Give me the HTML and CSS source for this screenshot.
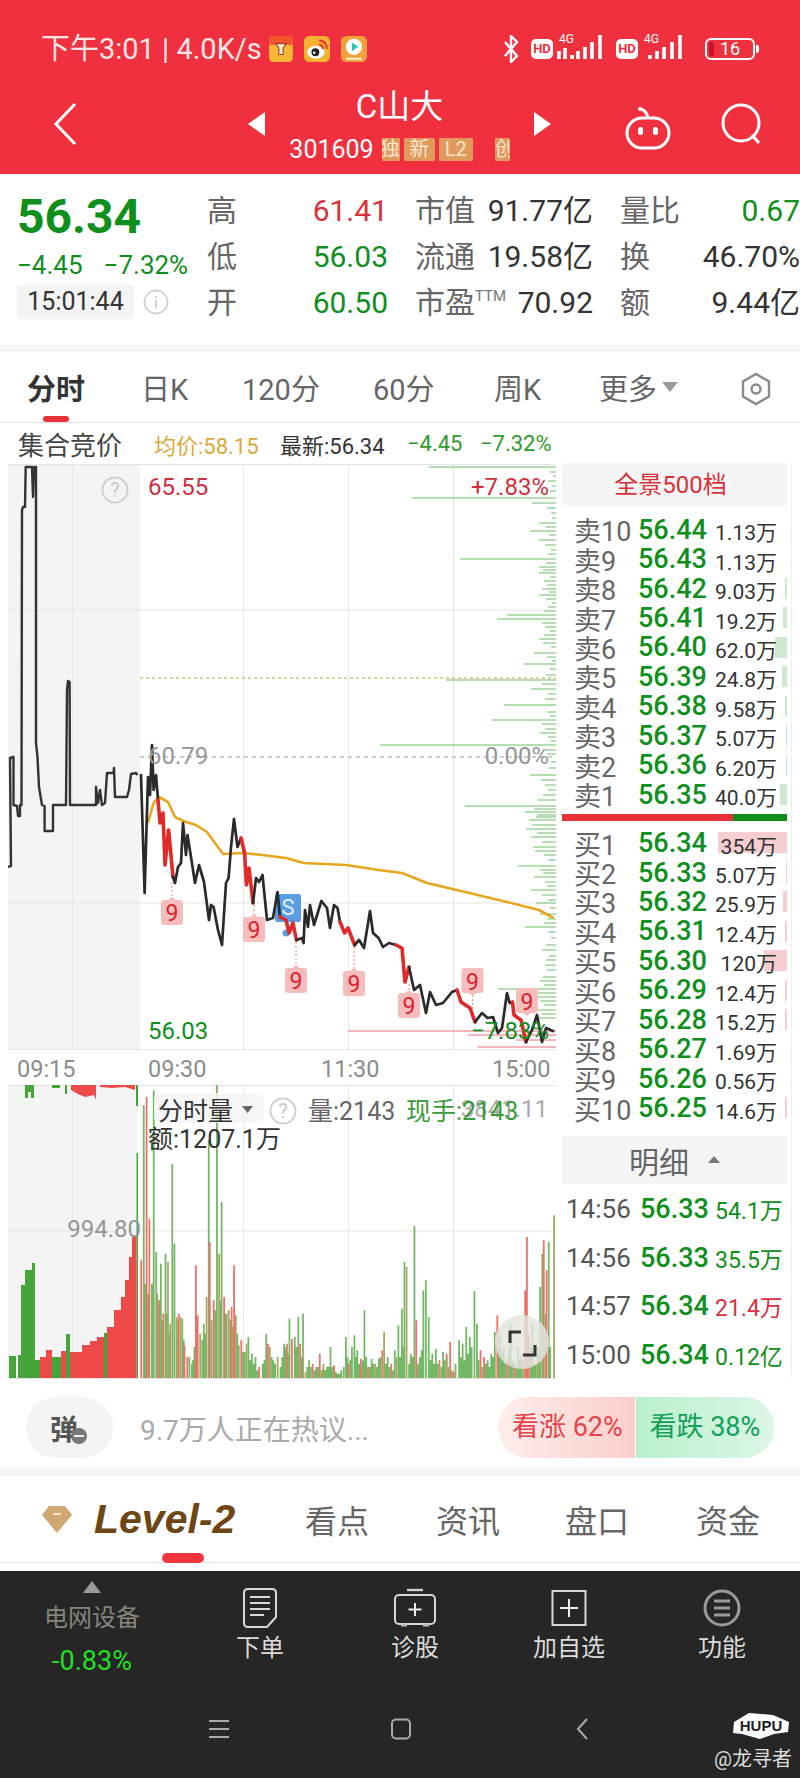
FILE: index.html
```html
<!DOCTYPE html>
<html lang="zh-CN">
<head>
<meta charset="utf-8">
<title>C山大</title>
<link rel="stylesheet" href="styles.css">
</head>
<body>
<div class="page">
  <header class="top">
    <div class="status">
      <span class="status-text">下午3:01 | 4.0K/s</span>
      <svg class="app-icon app-first" viewBox="0 0 24 24"><rect x="1" y="0" width="22" height="24" rx="4" fill="#f7b733"/><path d="M1 4a4 4 0 0 1 4-4h14a4 4 0 0 1 4 4v4H1z" fill="#f0552b"/><path d="M7 7h10l-3 4v6h-4v-6z" fill="#fff3c9" stroke="#a33" stroke-width="1"/></svg>
      <svg class="app-icon app-second" viewBox="0 0 24 24"><rect width="24" height="24" rx="5" fill="#f4b431"/><ellipse cx="11" cy="15" rx="8" ry="6" fill="#fff"/><circle cx="10.500" cy="15" r="3.600" fill="#222"/><circle cx="9.500" cy="15.500" r="1.200" fill="#fff"/><path d="M14 4a7 7 0 0 1 7 8M14 8a3.500 3.500 0 0 1 3.500 4" fill="none" stroke="#e6362c" stroke-width="2"/></svg>
      <svg class="app-icon app-third" viewBox="0 0 24 24"><rect width="24" height="24" rx="5" fill="#f2a03b"/><circle cx="12" cy="10" r="7.500" fill="#fff"/><path d="M10 6l6 4-6 4z" fill="#31c5b4"/><rect x="5" y="20" width="14" height="2" fill="#fff3c9"/></svg>
      <span class="status-right">
        <svg class="bt" viewBox="0 0 18 28"><path d="M3 7l12 14-6 6V1l6 6L3 21" fill="none" stroke="#fff" stroke-width="2.400"/></svg>
        <span class="hd">HD</span>
        <svg class="sig" viewBox="0 0 48 28"><text class="sig-text" x="2" y="10">4G</text><path d="M2 18v8M8 15v11M15 22v4M21 18v8M28 14v12M35 9v17M43 2v24" stroke="#fff" stroke-width="3.600" fill="none"/></svg>
        <span class="hd">HD</span>
        <svg class="sig" viewBox="0 0 48 28"><text class="sig-text" x="2" y="10">4G</text><path d="M8 22v4M15 18v8M22 14v12M30 9v17M38 2v24" stroke="#fff" stroke-width="3.600" fill="none"/></svg>
        <span class="battery"><i class="battery-low"></i><b class="battery-num">16</b></span>
      </span>
    </div>
    <div class="nav">
      <svg class="back" viewBox="0 0 24 44"><path d="M22 2L3 22l19 20" fill="none" stroke="#fff" stroke-width="3"/></svg>
      <svg class="arrow" viewBox="0 0 17 24"><path d="M17 0v24L0 12z" fill="#fff"/></svg>
      <div class="title-block">
        <div class="title">C山大</div>
        <div class="code-row">
          <span class="code">301609</span>
          <span class="badge badge-crop-l"><span>独</span></span>
          <span class="badge">新</span>
          <span class="badge badge-l2">L2</span>
          <span class="badge badge-crop-r"><span>创</span></span>
        </div>
      </div>
      <svg class="arrow" viewBox="0 0 17 24"><path d="M0 0v24l17-12z" fill="#fff"/></svg>
      <div class="nav-actions">
        <svg class="robot" viewBox="0 0 46 44"><path d="M23 12C22 7 19 4 16 3" fill="none" stroke="#fff" stroke-width="3"/><circle cx="15" cy="3" r="2" fill="#fff"/><rect x="2" y="12" width="42" height="30" rx="15" fill="none" stroke="#fff" stroke-width="3"/><rect x="13" y="21" width="5" height="8" rx="2.500" fill="#fff"/><rect x="28" y="21" width="5" height="8" rx="2.500" fill="#fff"/></svg>
        <svg class="search" viewBox="0 0 42 42"><circle cx="20" cy="20" r="18" fill="none" stroke="#fff" stroke-width="3"/><path d="M31 32l7 8" stroke="#fff" stroke-width="3"/></svg>
      </div>
    </div>
  </header>

  <section class="quote">
    <div class="price-block">
      <div class="price">56.34</div>
      <div class="delta"><span>−4.45</span><span>−7.32%</span></div>
      <div class="clock-row">
        <span class="clock">15:01:44</span>
        <svg class="info" viewBox="0 0 26 26"><circle cx="13" cy="13" r="11.500" fill="none" stroke="#d4d4d4" stroke-width="2"/><path d="M13 11v8M13 7v2" stroke="#d4d4d4" stroke-width="2"/></svg>
      </div>
    </div>
    <div class="stats">
      <div class="stat"><span>高</span><span class="red">61.41</span></div>
      <div class="stat"><span>市值</span><span class="ink">91.77亿</span></div>
      <div class="stat"><span>量比</span><span class="green">0.67</span></div>
      <div class="stat"><span>低</span><span class="green">56.03</span></div>
      <div class="stat"><span>流通</span><span class="ink">19.58亿</span></div>
      <div class="stat"><span>换</span><span class="ink">46.70%</span></div>
      <div class="stat"><span>开</span><span class="green">60.50</span></div>
      <div class="stat"><span>市盈<sup class="ttm">TTM</sup></span><span class="ink">70.92</span></div>
      <div class="stat"><span>额</span><span class="ink">9.44亿</span></div>
    </div>
  </section>

  <nav class="period-tabs">
    <span class="period period-active">分时</span>
    <span class="period">日K</span>
    <span class="period">120分</span>
    <span class="period">60分</span>
    <span class="period">周K</span>
    <span class="period">更多<i class="caret"></i></span>
    <svg class="hex" viewBox="0 0 34 34"><path d="M17 2l13 7.500v15L17 32 4 24.500v-15z" fill="none" stroke="#8a8a8a" stroke-width="2.400"/><circle cx="17" cy="17" r="4.500" fill="none" stroke="#8a8a8a" stroke-width="2.400"/></svg>
  </nav>

  <div class="subhead">
    <span class="sub-auction">集合竞价</span>
    <span class="sub-avg">均价:58.15</span>
    <span class="sub-last">最新:56.34</span>
    <span class="sub-green">−4.45</span>
    <span class="sub-green">−7.32%</span>
  </div>

  <main class="main">
    <div class="charts">
      <svg class="price-chart" viewBox="8 464 548 586">
        <rect x="8" y="464" width="132" height="586" fill="#f4f4f4"/>
        <path class="grid" d="M8 464.500H556M8 610H556M8 903H556M8 1049.500H556M73 464V1050M243.500 464V1050M348.500 464V1050M453.500 464V1050"/>
        <path class="dash-grey" d="M140 757H556"/>
        <path class="depth-green" d="M556 467H429M556 498H412M556 503H532M556 523H539M556 531H530M556 540H539M556 559H460M556 567H539M556 573H539M556 595H539M556 615H507M556 619H497M556 639H539M556 653H534M556 664H524M556 680H446M556 689H531M556 705H504M556 720H492M556 745H380M556 775H530M556 806H465M556 812H525M556 817H536M556 847H533M556 866H518M556 873H543M556 890H531M556 903H536M556 927H525M556 960H546M556 977H543M556 989H498M556 472h-6M556 476h-3M556 481h-8M556 486h-4M556 491h-6M556 508h-9M556 513h-5M556 518h-4M556 527h-10M556 535h-7M556 545h-11M556 550h-5M556 554h-8M556 563h-10M556 570h-13M556 577h-6M556 581h-12M556 585h-9M556 589h-14M556 592h-7M556 599h-10M556 603h-4M556 607h-8M556 611h-12M556 623h-14M556 627h-11M556 631h-6M556 635h-12M556 643h-13M556 647h-5M556 657h-9M556 661h-4M556 669h-6M556 675h-10M556 684h-14M556 694h-8M556 699h-11M556 712h-9M556 716h-6M556 724h-14M556 729h-11M556 733h-16M556 737h-8M556 741h-5M556 750h-12M556 754h-9M556 762h-5M556 768h-7M556 780h-15M556 785h-11M556 790h-8M556 795h-13M556 800h-18M556 809h-22M556 815h-19M556 820h-27M556 825h-24M556 829h-30M556 833h-19M556 837h-25M556 842h-14M556 851h-21M556 855h-12M556 860h-8M556 870h-16M556 877h-22M556 882h-11M556 886h-9M556 895h-14M556 900h-8M556 908h-6M556 914h-16M556 919h-9M556 923h-12M556 932h-8M556 938h-5M556 945h-10M556 950h-14M556 956h-7M556 965h-11M556 970h-9M556 981h-16M556 985h-12M556 993h-22M556 997h-26M556 1001h-16M556 1005h-12M556 1010h-19M556 1014h-14M556 1018h-22"/>
        <path class="depth-red" d="M556 1031H348M556 1035H468M556 1040H516M556 1047H478"/>
        <path class="dash-yellow" d="M140 678H556"/>
        <polyline class="line-black-thin" points="7,867 11,866 10,758 13.500,757 13.500,805 17,806 18,816 20,816 20,805 21.500,805 22,510 23,507 25,507 25.700,467 32,467 33,497 34,467 36,467 36,743 37.500,757 39,787 42,805 44.600,806 44.600,831 53,831 53,805 66,805 67,690 68,681 69.600,682 70,805 96,805 96,787 98,803 100,790 102,805 105,803 107,773 113.600,773 114,768 115,797 127,797 129,790 131,774 136,773 137.500,775"/>
        <polyline class="line-orange" points="148,823 153.600,803 159,797 168,802 175,817 186,822 196,825 207,832 223,854 243,853 262.500,855 286,858 303.600,863 346,865 378.600,870 402,873 427,883 461,891 507,902 539,910 553.600,918"/>
        <line class="stem" x1="172" y1="882" x2="172" y2="900"/>
        <line class="stem" x1="254" y1="905" x2="254" y2="917"/>
        <line class="stem" x1="296" y1="942" x2="296" y2="968"/>
        <line class="stem" x1="354" y1="947" x2="354" y2="971"/>
        <line class="stem" x1="409" y1="984" x2="409" y2="993"/>
        <line class="stem" x1="472.500" y1="995" x2="472.500" y2="1020"/>
        <rect class="s-badge" x="275" y="894" width="26" height="28" rx="2"/>
        <circle class="s-dot" cx="286" cy="933" r="3.500"/>
        <text class="s-text" x="288" y="915">S</text>
        <polyline class="line-black" points="141,775 144.600,893 148,777 150,795 152,745 153.600,790 156,775 158,800"/>
        <polyline class="line-red" points="158,800 160,823 163,813 165,865 168.600,830 173,877"/>
        <polyline class="line-black" points="173,877 175,883 178,867 181,863 183,823 186,855 187.500,835 191,857 195,883 199,865 204,882 209,920 211,905 213.600,907 218,930 222,945 226,883 228.600,878 231,847 234,819 237.500,847 241,838"/>
        <polyline class="line-red" points="241,838 244.600,853 246.400,885 249,868 253,903"/>
        <polyline class="line-black" points="253,903 256,878 259,882 262.500,875 267,920 273,918 277.500,892 280,917"/>
        <polyline class="line-red" points="280,917 286,920 289,933 293,923 296.400,940"/>
        <polyline class="line-black" points="296.400,940 302,938 303.600,943 305,910 308,927 310,905 314,925 321.400,901 327,908 330,928 334,905 337.500,908 340,922"/>
        <polyline class="line-red" points="340,922 344.600,933 348,928 354.600,945"/>
        <polyline class="line-black" points="354.600,945 359,940 364,948 370,911 373,933 378.600,938 383,947 389,943 396,945"/>
        <polyline class="line-red" points="396,945 402,948 405,982 409,967"/>
        <polyline class="line-black" points="409,967 414,990 420,985 426,1013 430,992 436,1005 443,1003 452,992 457,990"/>
        <polyline class="line-red" points="457,990 461,1002 470,1008 475,1022"/>
        <polyline class="line-black" points="475,1022 482,1013 487.500,1018 493,1017 498,1033 502,1028 507,993 509.600,1003 512.500,1002"/>
        <polyline class="line-red" points="512.500,1002 514,1015 521,1020 526,1042"/>
        <polyline class="line-black" points="526,1042 532,1030 537,1015 542,1042 546,1028 553,1031"/>
        <g class="nine-group">
          <path class="nine-bg" d="M161 903q0-3 3-3h4l4-3 4 3h4q3 0 3 3v19q0 3-3 3h-16q-3 0-3-3z"/><text class="nine" x="172" y="921">9</text>
          <path class="nine-bg" d="M243 920q0-3 3-3h4l4-3 4 3h4q3 0 3 3v19q0 3-3 3h-16q-3 0-3-3z"/><text class="nine" x="254" y="938">9</text>
          <path class="nine-bg" d="M285 971q0-3 3-3h4l4-3 4 3h4q3 0 3 3v19q0 3-3 3h-16q-3 0-3-3z"/><text class="nine" x="296" y="989">9</text>
          <path class="nine-bg" d="M343 974q0-3 3-3h4l4-3 4 3h4q3 0 3 3v19q0 3-3 3h-16q-3 0-3-3z"/><text class="nine" x="354" y="992">9</text>
          <path class="nine-bg" d="M398 996q0-3 3-3h4l4-3 4 3h4q3 0 3 3v19q0 3-3 3h-16q-3 0-3-3z"/><text class="nine" x="409" y="1014">9</text>
          <path class="nine-bg" d="M461.500 971q0-3 3-3h16q3 0 3 3v19q0 3-3 3h-4l-4 3-4-3h-4q-3 0-3-3z"/><text class="nine" x="472.500" y="990">9</text>
          <path class="nine-bg" d="M516 991q0-3 3-3h16q3 0 3 3v19q0 3-3 3h-4l-4 3-4-3h-4q-3 0-3-3z"/><text class="nine" x="527" y="1010">9</text>
        </g>
        <g class="help"><circle cx="115" cy="490" r="12.500"/><text x="115" y="497">?</text></g>
        <text class="chart-label red-fill" x="148" y="495">65.55</text>
        <text class="chart-label red-fill end" x="549" y="495">+7.83%</text>
        <text class="chart-label grey-fill" x="148" y="764">60.79</text>
        <text class="chart-label grey-fill end" x="549" y="764">0.00%</text>
        <text class="chart-label green-fill" x="148" y="1039">56.03</text>
        <text class="chart-label green-fill end" x="549" y="1039">−7.83%</text>
      </svg>
      <div class="time-axis">
        <span>09:15</span><span>09:30</span><span>11:30</span><span>15:00</span>
      </div>
      <svg class="volume-chart" viewBox="8 1085 548 295">
        <rect x="8" y="1085" width="130" height="293" fill="#f4f4f4"/>
        <path class="grid" d="M8 1085.500H556M8 1231H556M8 1378.500H556M73 1085V1378M243.500 1085V1378M348.500 1085V1378M453.500 1085V1378"/>
        <path class="pre-green" d="M9 1378V1356H16V1378ZM18 1378V1355H21V1285H25V1270H32V1263H35V1360H40V1378ZM52 1378V1357H61V1378ZM66 1378V1334H70V1378ZM104 1378V1333H107V1378ZM136.500 1378V1153H138V1378ZM25 1085H34V1098H31V1092H28V1098H25ZM65 1085H67V1094H65ZM136 1085H138V1106H136ZM52 1085H60V1088H52Z"/>
        <path class="pre-red" d="M40 1378V1357H46V1350H52V1378ZM61 1378V1351H66V1378ZM70 1378V1352H82V1345H90V1341H97V1337H104V1378ZM107 1378V1327H114V1310H121V1297H125V1280H129V1257H132V1237H136.500V1378ZM71 1085H96V1100L94 1095L85 1097L78 1094L71 1090ZM100 1085H135V1090L125 1087L112 1088L100 1087Z"/>
        <svg x="8" y="1085" width="548.600" height="293.300" viewBox="22 14 1536 880" preserveAspectRatio="none">
          <path class="bars-green" d="M406 893V610M414 893V640M442 893V680M455 893V720M467 893V700M473 893V760M498 893V720M514 893V780M537 893V850M544 893V800M566 893V780M574 893V760M592 893V720M602 893V690M617 893V660M630 893V700M644 893V720M652 893V740M664 893V760M680 893V815M700 893V840M710 893V850M720 893V870M740 893V840M765 893V840M790 893V830M798 893V800M806 893V820M830 893V800M845 893V830M860 893V860M870 893V860M880 893V870M890 893V860M900 893V870M910 893V870M920 893V860M930 893V860M940 893V875M950 893V880M962 893V860M972 893V830M980 893V840M995 893V830M1005 893V850M1015 893V840M1025 893V830M1035 893V860M1045 893V850M1055 893V860M1065 893V830M1080 893V850M1090 893V860M1100 893V870M1120 893V830M1128 893V800M1145 893V850M1155 893V830M1170 893V850M1180 893V810M1205 893V840M1215 893V850M1225 893V850M1235 893V860M1245 893V840M1255 893V860M1265 893V870M1275 893V850M1290 893V830M1300 893V840M1310 893V820M1320 893V800M1340 893V840M1350 893V860M1360 893V850M1370 893V860M1380 893V830M1395 893V800M1405 893V820M1415 893V850M1425 893V800M1435 893V840M1445 893V860M1455 893V840M1485 893V800M1495 893V850M1508 893V820M1527 893V700M1540 893V800M402 893V75M430 893V30M425 893V610M437 893V515M450 893V550M463 893V520M482 893V250M488 893V490M510 893V715M530 893V830M540 893V840M570 893V730M584 893V180M607 893V10M620 893V365M634 893V700M668 893V795M685 893V815M695 893V770M705 893V820M715 893V830M735 893V850M745 893V760M760 893V830M770 893V850M785 893V860M795 893V790M810 893V715M825 893V770M835 893V710M848 893V700M865 893V840M885 893V860M905 893V865M915 893V860M925 893V800M945 893V880M955 893V870M968 893V770M985 893V800M992 893V765M1000 893V810M1020 893V690M1040 893V835M1060 893V835M1085 893V830M1105 893V810M1115 893V735M1125 893V685M1132 893V545M1150 893V820M1160 893V437M1175 893V830M1185 893V630M1192 893V600M1200 893V710M1210 893V820M1220 893V805M1240 893V815M1285 893V780M1295 893V790M1305 893V740M1315 893V770M1328 893V632M1335 893V730M1365 893V840M1375 893V820M1385 893V755M1400 893V760M1410 893V800M1430 893V730M1450 893V800M1460 893V820M1490 893V730M1500 893V850M1512 893V620M1518 893V520M1536 893V485"/>
          <path class="bars-red" d="M395 893V540M410 893V50M418 893V415M445 893V660M457 893V700M500 893V700M516 893V795M524 893V830M548 893V555M553 893V705M587 893V485M598 893V660M627 893V650M648 893V680M655 893V555M675 893V780M725 893V860M750 893V790M803 893V790M817 893V775M840 893V790M875 893V850M895 893V820M935 893V855M975 893V850M1010 893V835M1030 893V860M1070 893V810M1095 893V850M1165 893V720M1230 893V840M1250 893V820M1260 893V785M1270 893V875M1345 893V810M1355 893V830M1392 893V705M1420 893V830M1440 893V850M1470 893V630M1475 893V470M1480 893V760M1522 893V480M1530 893V570"/>
          <path class="bars-olive" d="M440 893V640M470 893V545M476 893V730M494 893V710M505 893V710M560 893V760M578 893V650M613 893V520M640 893V690M660 893V705M690 893V790M755 893V800M777 893V830M855 893V875M905 893V850M1050 893V850M1075 893V755M1138 893V560M1110 893V830M1250 893V830M1465 893V840M1505 893V800M1551 893V405"/>
        </svg>
        <rect class="vol-chip" x="154" y="1093" width="110" height="30" rx="6"/>
        <text class="chart-label grey-fill end" x="141" y="1237">994.80</text>
        <text class="vol-behind end" x="548" y="1117">3841.11</text>
        <text class="vol-text ink-fill" x="158" y="1120">分时量</text>
        <path class="vol-caret" d="M242 1106h11l-5.500 7z"/>
        <g class="help"><circle cx="283" cy="1111" r="12.500"/><text x="283" y="1118">?</text></g>
        <text class="vol-text grey-dark-fill" x="308" y="1120">量:2143</text>
        <text class="vol-text green-mid-fill" x="406" y="1120">现手:2143</text>
        <text class="vol-text ink-fill" x="148" y="1148">额:1207.1万</text>
        <circle class="expand" cx="522" cy="1342" r="27"/>
        <path class="expand-mark" d="M510 1343V1332H521M535 1345V1355H523"/>
      </svg>
    </div>

    <aside class="side">
      <div class="side-head side-head-red">全景500档</div>
      <div class="book">
        <div class="book-row"><span class="book-label">卖10</span><span class="book-price">56.44</span><span class="book-vol">1.13万</span></div>
        <div class="book-row"><span class="book-label">卖9</span><span class="book-price">56.43</span><span class="book-vol">1.13万</span></div>
        <div class="book-row"><i class="bar bar-sell" style="width:2px"></i><span class="book-label">卖8</span><span class="book-price">56.42</span><span class="book-vol">9.03万</span></div>
        <div class="book-row"><i class="bar bar-sell" style="width:4px"></i><span class="book-label">卖7</span><span class="book-price">56.41</span><span class="book-vol">19.2万</span></div>
        <div class="book-row"><i class="bar bar-sell" style="width:12px"></i><span class="book-label">卖6</span><span class="book-price">56.40</span><span class="book-vol">62.0万</span></div>
        <div class="book-row"><i class="bar bar-sell" style="width:5px"></i><span class="book-label">卖5</span><span class="book-price">56.39</span><span class="book-vol">24.8万</span></div>
        <div class="book-row"><i class="bar bar-sell" style="width:2px"></i><span class="book-label">卖4</span><span class="book-price">56.38</span><span class="book-vol">9.58万</span></div>
        <div class="book-row"><i class="bar bar-sell" style="width:1px"></i><span class="book-label">卖3</span><span class="book-price">56.37</span><span class="book-vol">5.07万</span></div>
        <div class="book-row"><i class="bar bar-sell" style="width:1px"></i><span class="book-label">卖2</span><span class="book-price">56.36</span><span class="book-vol">6.20万</span></div>
        <div class="book-row"><i class="bar bar-sell" style="width:7px"></i><span class="book-label">卖1</span><span class="book-price">56.35</span><span class="book-vol">40.0万</span></div>
      </div>
      <div class="split"><i class="split-red"></i><i class="split-green"></i></div>
      <div class="book">
        <div class="book-row"><i class="bar bar-buy" style="width:69px"></i><span class="book-label">买1</span><span class="book-price">56.34</span><span class="book-vol">354万</span></div>
        <div class="book-row"><i class="bar bar-buy" style="width:1px"></i><span class="book-label">买2</span><span class="book-price">56.33</span><span class="book-vol">5.07万</span></div>
        <div class="book-row"><i class="bar bar-buy" style="width:4px"></i><span class="book-label">买3</span><span class="book-price">56.32</span><span class="book-vol">25.9万</span></div>
        <div class="book-row"><i class="bar bar-buy" style="width:2px"></i><span class="book-label">买4</span><span class="book-price">56.31</span><span class="book-vol">12.4万</span></div>
        <div class="book-row"><i class="bar bar-buy" style="width:23px"></i><span class="book-label">买5</span><span class="book-price">56.30</span><span class="book-vol">120万</span></div>
        <div class="book-row"><i class="bar bar-buy" style="width:2px"></i><span class="book-label">买6</span><span class="book-price">56.29</span><span class="book-vol">12.4万</span></div>
        <div class="book-row"><i class="bar bar-buy" style="width:2px"></i><span class="book-label">买7</span><span class="book-price">56.28</span><span class="book-vol">15.2万</span></div>
        <div class="book-row"><span class="book-label">买8</span><span class="book-price">56.27</span><span class="book-vol">1.69万</span></div>
        <div class="book-row"><span class="book-label">买9</span><span class="book-price">56.26</span><span class="book-vol">0.56万</span></div>
        <div class="book-row"><i class="bar bar-buy" style="width:2px"></i><span class="book-label">买10</span><span class="book-price">56.25</span><span class="book-vol">14.6万</span></div>
      </div>
      <div class="side-head side-head-detail">明细<i class="detail-caret"></i></div>
      <div class="deal"><span class="deal-time">14:56</span><span class="deal-price">56.33</span><span class="deal-vol green">54.1万</span></div>
      <div class="deal"><span class="deal-time">14:56</span><span class="deal-price">56.33</span><span class="deal-vol green">35.5万</span></div>
      <div class="deal"><span class="deal-time">14:57</span><span class="deal-price">56.34</span><span class="deal-vol red">21.4万</span></div>
      <div class="deal"><span class="deal-time">15:00</span><span class="deal-price">56.34</span><span class="deal-vol green">0.12亿</span></div>
    </aside>
  </main>

  <section class="comment">
    <div class="danmu"><span class="danmu-text">弹</span><i class="danmu-minus"></i></div>
    <span class="comment-text">9.7万人正在热议...</span>
    <div class="vote"><span class="vote-up">看涨 62%</span><span class="vote-down">看跌 38%</span></div>
  </section>

  <nav class="detail-tabs">
    <svg class="diamond" viewBox="0 0 30 27"><path d="M7 0h16l7 9-15 18L0 9z" fill="#cfa874"/><path d="M11 8h8" stroke="#f4e4cc" stroke-width="2"/></svg>
    <span class="level">Level-2</span>
    <span class="dtab dtab-first">看点</span>
    <span class="dtab">资讯</span>
    <span class="dtab">盘口</span>
    <span class="dtab">资金</span>
  </nav>

  <footer class="dark">
    <div class="actions">
      <div class="sector">
        <svg class="sector-tri" viewBox="0 0 20 12"><path d="M10 0l9 12H1z" fill="#9a9a9a"/></svg>
        <span class="sector-name">电网设备</span>
        <span class="sector-pct">-0.83%</span>
      </div>
      <div class="action">
        <svg class="action-icon" viewBox="0 0 40 40"><path d="M8 1h24q4 0 4 4v24l-9 10H8q-4 0-4-4V5q0-4 4-4z" fill="none" stroke="#d8d8d8" stroke-width="2"/><path d="M10 9h20M10 15h20M10 21h20M10 27h14" stroke="#d8d8d8" stroke-width="2"/></svg>
        <span class="action-label">下单</span>
      </div>
      <div class="action">
        <svg class="action-icon action-wide" viewBox="0 0 42 40"><path d="M13 2h16" stroke="#cfcfcf" stroke-width="2.400"/><rect x="1" y="7" width="40" height="29" rx="4" fill="none" stroke="#d8d8d8" stroke-width="2"/><path d="M21 15v13M14.500 21.500h13" stroke="#eee" stroke-width="2"/><path d="M7 37h6M29 37h6" stroke="#bbb" stroke-width="3"/></svg>
        <span class="action-label">诊股</span>
      </div>
      <div class="action">
        <svg class="action-icon" viewBox="0 0 40 40"><rect x="3.500" y="3" width="33" height="34" fill="none" stroke="#d8d8d8" stroke-width="2"/><path d="M20 11v18M11 20h18" stroke="#eee" stroke-width="2"/></svg>
        <span class="action-label">加自选</span>
      </div>
      <div class="action">
        <svg class="action-icon" viewBox="0 0 40 40"><circle cx="20" cy="20" r="17" fill="none" stroke="#9a9a9a" stroke-width="3"/><path d="M12 13h16M12 20h16M12 27h16" stroke="#9a9a9a" stroke-width="3"/></svg>
        <span class="action-label">功能</span>
      </div>
    </div>
    <div class="sysnav">
      <svg class="sys-icon" viewBox="0 0 22 20"><path d="M1 2h20M1 10h20M1 18h20" stroke="#aaa" stroke-width="2"/></svg>
      <svg class="sys-icon" viewBox="0 0 22 22"><rect x="2" y="1.500" width="18" height="19" rx="4" fill="none" stroke="#aaa" stroke-width="2"/></svg>
      <svg class="sys-icon" viewBox="0 0 22 22"><path d="M15 1L6 11l9 10" fill="none" stroke="#aaa" stroke-width="2"/></svg>
    </div>
    <div class="watermark">
      <svg class="hupu" viewBox="0 0 58 27"><path d="M2 10L17 1l24 2 16 7-1 10-14 2-14 5-18-5-9-1z" fill="#fff"/><text class="hupu-text" x="29" y="19">HUPU</text></svg>
      <span class="author">@龙寻者</span>
    </div>
  </footer>
</div>
</body>
</html>
```

FILE: styles.css
```css
* { box-sizing: border-box; }
html, body { margin: 0; padding: 0; background: #fff; }
body { font-family: Roboto, "Noto Sans CJK SC", sans-serif; color: #333; }
i { display: block; font-style: normal; }
svg { display: block; }
.page { width: 800px; height: 1778px; overflow: hidden; display: flex; flex-direction: column; position: relative; }

.red { color: #d8323c; }
.green { color: #0f8f1c; }
.ink { color: #333; }

/* header */
.top { height: 174px; background: #f0303e; color: #fff; flex: none; }
.status { height: 68px; padding: 30px 0 0 41px; display: flex; align-items: center; }
.status-text { font-size: 29px; line-height: 38px; white-space: nowrap; width: 227px; color: #fbe5e5; }
.app-icon { width: 26px; height: 26px; flex: none; }
.app-second { margin-left: 10px; }
.app-third { margin-left: 11px; }
.status-right { margin-left: 135px; display: flex; align-items: center; width: 257px; }
.bt { width: 18px; height: 28px; }
.hd { font-size: 13px; font-weight: 700; background: #fff; color: #f0303e; border-radius: 5px; width: 22px; height: 20px; line-height: 20px; text-align: center; margin-left: 11px; }
.sig { width: 48px; height: 28px; margin-left: 4px; margin-top: -4px; }
.sig-text { font-size: 12px; fill: #fff; }
.battery { position: relative; width: 50px; height: 22px; border: 2px solid #fff; border-radius: 6px; margin-left: 15px; flex: none; }
.battery::after { content: ""; position: absolute; right: -6px; top: 5px; width: 3px; height: 8px; background: #fff; border-radius: 0 2px 2px 0; }
.battery-low { position: absolute; left: 2px; top: 2px; bottom: 2px; width: 5px; background: #c8102e; border-radius: 2px; }
.battery-num { position: absolute; left: 13px; top: -1px; font-size: 18px; line-height: 20px; font-weight: 400; }

.nav { height: 106px; display: grid; grid-template-columns: 248px 17px 269px 16px 1fr; align-items: center; padding-top: 6px; }
.back { width: 24px; height: 44px; margin-left: 53px; }
.arrow { width: 17px; height: 24px; }
.title-block { display: flex; flex-direction: column; align-items: center; }
.title { font-size: 33px; line-height: 40px; height: 51px; }
.code-row { display: flex; align-items: center; height: 24px; }
.code { font-size: 25px; line-height: 24px; margin-right: 8px; }
.badge { width: 31px; height: 23px; line-height: 23px; background: #e09a5c; color: #f9e5cd; font-size: 20px; text-align: center; margin-right: 4px; overflow: hidden; display: flex; justify-content: center; border-radius: 1px; }
.badge span { flex: none; }
.badge-crop-l { width: 18px; justify-content: flex-end; }
.badge-l2 { width: 34px; margin-right: 22px; }
.badge-crop-r { width: 15px; justify-content: flex-start; margin-right: 0; }
.nav-actions { display: flex; align-items: center; margin-left: 75px; gap: 50px; }
.robot { width: 46px; height: 44px; margin-top: 8px; }
.search { width: 42px; height: 42px; }

/* quote */
.quote { height: 171px; display: flex; flex: none; padding-left: 16px; }
.price-block { width: 191px; padding-top: 21px; }
.price { font-size: 48px; line-height: 44px; height: 44px; font-weight: 700; color: #0f8f1c; margin-left: 1px; }
.delta { display: flex; gap: 21px; margin-top: 14px; height: 24px; line-height: 24px; font-size: 26px; color: #0f8f1c; margin-left: 1px; white-space: nowrap; }
.clock-row { display: flex; align-items: center; margin-top: 8px; margin-left: 1px; }
.clock { width: 117px; height: 34px; background: #f4f4f4; border-radius: 4px; font-size: 25px; line-height: 34px; text-align: center; color: #333; }
.info { width: 26px; height: 26px; margin-left: 9px; }
.stats { display: grid; grid-template-columns: 181px 178px 180px; column-gap: 27px; grid-auto-rows: 46px; padding-top: 14px; height: 171px; }
.stat { display: flex; justify-content: space-between; align-items: center; font-size: 30px; color: #666; white-space: nowrap; position: relative; }
.stat span { line-height: 46px; }
.ttm { font-size: 15px; line-height: 0; vertical-align: 12px; color: #777; }

/* period tabs */
.period-tabs { margin-top: 7px; height: 71px; border-bottom: 1px solid #e6e6e6; flex: none; display: grid; grid-template-columns: 114px 101px 131px 121px 105px 157px 34px; align-items: center; padding-left: 27px; position: relative; box-shadow: 0 -7px 0 #f5f5f5; }
.period { font-size: 29px; color: #666; white-space: nowrap; display: flex; align-items: center; }
.period-active { color: #333; font-weight: 700; position: relative; height: 70px; }
.period-active::after { content: ""; position: absolute; left: 16px; bottom: 0; width: 26px; height: 6px; border-radius: 3px; background: #e8303a; }
.caret { width: 0; height: 0; border: 8px solid transparent; border-top: 10px solid #9a9a9a; border-bottom: 0; margin-left: 5px; }
.hex { width: 34px; height: 34px; margin-left: -17px; margin-top: 3px; }

/* subhead */
.subhead { height: 41px; flex: none; display: grid; grid-template-columns: 136px 126px 127px 73px auto; align-items: center; padding-left: 18px; font-size: 22px; white-space: nowrap; }
.sub-auction { font-size: 26px; color: #444; }
.sub-avg { color: #d9a93a; }
.sub-last { color: #333; }
.sub-green { color: #2f9a2f; }

/* main */
.main { flex: none; height: 916px; display: flex; }
.charts { width: 556px; padding-left: 8px; flex: none; }
.price-chart { width: 548px; height: 586px; }
.volume-chart { width: 548px; height: 295px; }
.time-axis { height: 35px; display: grid; grid-template-columns: 131px 173px 171px auto; padding: 2px 0 0 9px; font-size: 23.500px; line-height: 35px; color: #8c8c8c; }

.grid { fill: none; stroke: #e4e4e4; stroke-width: 1; }
.dash-grey { stroke: #9a9a9a; stroke-width: 1; stroke-dasharray: 4 4; fill: none; }
.dash-yellow { stroke: #c9a03a; stroke-width: 1; stroke-dasharray: 3 3; fill: none; }
.depth-green { stroke: #9ed49a; stroke-width: 1.500; fill: none; }
.depth-red { stroke: #f0a0a5; stroke-width: 1.500; fill: none; }
.line-black-thin { fill: none; stroke: #333; stroke-width: 2.400; stroke-linejoin: round; }
.line-black { fill: none; stroke: #2a2a2a; stroke-width: 2.700; stroke-linejoin: round; stroke-linecap: round; }
.line-red { fill: none; stroke: #e02a2a; stroke-width: 3.600; stroke-linejoin: round; stroke-linecap: round; }
.line-orange { fill: none; stroke: #e6a71f; stroke-width: 2.600; stroke-linejoin: round; }
.stem { stroke: #e58a8a; stroke-width: 1; stroke-dasharray: 2 2; }
.nine-bg { fill: #f7bcbc; }
.nine { font-size: 23px; fill: #d9242e; text-anchor: middle; }
.s-badge { fill: #5b9de3; }
.s-dot { fill: #5b9de3; }
.s-text { font-size: 22px; fill: #e6f0fb; text-anchor: middle; }
.help circle { fill: none; stroke: #cfcfcf; stroke-width: 2; }
.help text { font-size: 20px; fill: #c8c8c8; text-anchor: middle; }
.chart-label { font-size: 24px; }
.end { text-anchor: end; }
.red-fill { fill: #cf2f3a; }
.grey-fill { fill: #969696; }
.green-fill { fill: #0f8f1c; }
.ink-fill { fill: #333; }
.grey-dark-fill { fill: #666; }
.green-mid-fill { fill: #3a9a3a; }
.pre-green { fill: #45a53a; }
.pre-red { fill: #ef4a4a; }
.bars-green { fill: none; stroke: #72b865; stroke-width: 5; }
.bars-red { fill: none; stroke: #ec7168; stroke-width: 5; }
.bars-olive { fill: none; stroke: #a9a662; stroke-width: 5; }
.vol-chip { fill: #f4f4f4; fill-opacity: .85; }
.vol-text { font-size: 25px; }
.vol-behind { font-size: 24px; fill: #aaa; }
.vol-caret { fill: #666; }
.expand { fill: #e4e4e0; fill-opacity: .82; }
.expand-mark { fill: none; stroke: #333; stroke-width: 3; }

/* side */
.side { width: 236px; flex: none; padding: 0 4px 0 6px; border-right: 1px solid #f0f0f0; margin-top: -1px; }
.side-head { height: 43px; background: #f5f5f5; display: flex; align-items: center; justify-content: center; width: 225px; }
.side-head-red { color: #d8323c; font-size: 24px; margin-bottom: 9px; padding: 0 8px 4px 0; }
.side-head-detail { height: 48px; margin-top: 13px; margin-bottom: 1px; font-size: 30px; color: #666; }
.detail-caret { width: 0; height: 0; border: 6px solid transparent; border-bottom: 7px solid #777; border-top: 0; margin-left: 19px; }
.book-row { height: 29.440px; position: relative; display: flex; align-items: center; padding-left: 12px; white-space: nowrap; }
.book-label { width: 64px; font-size: 27px; color: #666; position: relative; }
.book-price { width: 71px; font-size: 27px; font-weight: 500; color: #0f8f1c; position: relative; }
.book-vol { width: 67px; text-align: right; font-size: 21px; color: #333; position: relative; margin-left: 1px; padding-top: 3px; }
.bar { position: absolute; right: 0; top: 4px; height: 21px; }
.bar-sell { background: #cfe6cf; }
.bar-buy { background: #f6cdd1; }
.split { height: 7px; display: flex; margin: 5px 0 7px; width: 225px; }
.split-red { width: 171px; background: #e8323a; }
.split-green { flex: 1; background: #0f8f1c; }
.deal { height: 48.700px; display: flex; align-items: center; padding-left: 4px; white-space: nowrap; }
.deal-time { width: 74px; font-size: 26px; color: #555; }
.deal-price { width: 75px; font-size: 27px; font-weight: 500; color: #0f8f1c; }
.deal-vol { font-size: 23px; }

/* comment */
.comment { height: 87px; flex: none; display: flex; align-items: center; padding: 8px 0 0 26px; }
.danmu { width: 87px; height: 61px; border-radius: 30px; background: #f4f4f4; position: relative; display: flex; align-items: center; padding-left: 24px; }
.danmu-text { font-size: 28px; font-weight: 700; color: #555; }
.danmu-minus { position: absolute; left: 45px; top: 31px; width: 16px; height: 16px; border-radius: 50%; background: #777; }
.danmu-minus::after { content: ""; position: absolute; left: 3px; right: 3px; top: 7px; height: 2px; background: #eee; }
.comment-text { margin-left: 27px; width: 358px; font-size: 28px; color: #aaa; white-space: nowrap; }
.vote { display: flex; height: 61px; width: 276px; font-size: 27px; line-height: 61px; white-space: nowrap; }
.vote-up { width: 137px; background: linear-gradient(90deg, #fdeeea, #fbcfcb); color: #e8424a; border-radius: 30px 0 0 30px; padding-left: 14px; }
.vote-down { width: 139px; background: linear-gradient(90deg, #b9f0cd, #dcf7e6); color: #14a05a; border-radius: 0 30px 30px 0; padding-left: 14px; margin-left: 1px; }

/* detail tabs */
.detail-tabs { height: 95px; flex: none; margin-top: 9px; display: grid; grid-template-columns: 52px 211px 131px 129px 131px auto; align-items: center; padding: 0 0 9px 42px; position: relative; box-shadow: 0 -9px 0 #f5f5f5; }
.detail-tabs::before { content: ""; position: absolute; left: 0; right: 0; top: 86px; height: 1px; background: #e2e2e2; }
.detail-tabs::after { content: ""; position: absolute; left: 162px; top: 77px; width: 42px; height: 10px; border-radius: 5px; background: #f0353d; }
.diamond { width: 30px; height: 27px; }
.level { font-size: 41px; font-weight: 700; font-style: italic; color: #6e4514; font-family: "Liberation Sans", sans-serif; }
.dtab { font-size: 32px; color: #666; white-space: nowrap; }

/* dark footer */
.dark { flex: 1; background: #262626; position: relative; }
.actions { display: grid; grid-template-columns: 184px 152px 158px 150px 156px; height: 129px; }
.sector { display: flex; flex-direction: column; align-items: center; padding-top: 10px; }
.sector-tri { width: 20px; height: 12px; }
.sector-name { font-size: 24px; line-height: 30px; margin-top: 10px; color: #85857b; }
.sector-pct { font-size: 27px; line-height: 30px; margin-top: 13px; color: #24e024; }
.action { display: flex; flex-direction: column; align-items: center; padding-top: 17px; }
.action-icon { width: 40px; height: 40px; }
.action-wide { width: 42px; }
.action-label { font-size: 24px; line-height: 32px; margin-top: 4px; color: #dcdcdc; white-space: nowrap; }
.sysnav { display: grid; grid-template-columns: 22px 22px 22px; column-gap: 160px; padding-left: 208px; height: 22px; margin-top: 18px; align-items: center; }
.sys-icon { width: 22px; height: 22px; }
.watermark { position: absolute; right: 8px; bottom: 4px; display: flex; flex-direction: column; align-items: flex-end; }
.hupu { width: 58px; height: 27px; margin-right: 2px; }
.hupu-text { font-size: 15px; font-weight: 900; fill: #222; text-anchor: middle; font-family: "Liberation Sans", sans-serif; }
.author { font-size: 20px; line-height: 30px; margin-top: 5px; color: #ddd; white-space: nowrap; }
```
